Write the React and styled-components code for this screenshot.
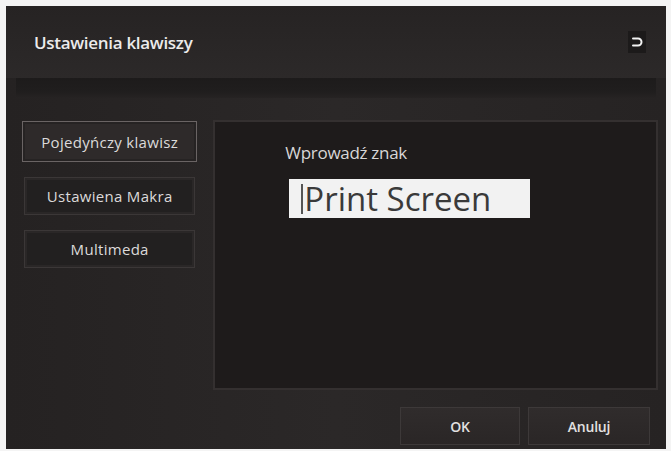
import React from 'react'
import styled, { createGlobalStyle } from 'styled-components'

const GlobalStyle = createGlobalStyle`
  html, body {
    margin: 0;
    padding: 0;
    background: #f4f4f4;
  }
  body {
    font-family: "Open Sans", "DejaVu Sans", sans-serif;
  }
`

const Frame = styled.div`
  margin: 6px 0 0 6px;
  width: 660px;
  height: 443px;
  display: flex;
  flex-direction: column;
  background: linear-gradient(90deg, #252222 0%, #2b2828 50%, #262323 100%);
  overflow: hidden;
`

const Header = styled.div`
  height: 72px;
  display: flex;
  align-items: center;
  justify-content: space-between;
  padding: 0 20px 0 28px;
  box-sizing: border-box;
  background: linear-gradient(180deg, #262323 0%, #2c2929 100%);
`

const Title = styled.h1`
  margin: 0;
  font-size: 17px;
  font-weight: 600;
  letter-spacing: -0.3px;
  color: #ecebeb;
`

const BackButton = styled.button`
  width: 18px;
  height: 22px;
  padding: 0;
  border: none;
  background: #1c1a1a;
  display: flex;
  align-items: center;
  justify-content: center;
`

const Separator = styled.div`
  height: 20px;
  margin: 0 10px;
  background: linear-gradient(180deg, #1d1b1b 0%, #201e1e 70%, #262323 100%);
`

const Body = styled.div`
  flex: 1;
  display: flex;
  padding: 22px 8px 0 16px;
  gap: 16px;
`

const Sidebar = styled.div`
  width: 176px;
  display: flex;
  flex-direction: column;
  gap: 15px;
  padding-top: 1px;
`

const SideButton = styled.button`
  height: ${p => (p.$active ? '41px' : '38px')};
  margin: 0 ${p => (p.$active ? '0' : '2px')};
  border: 1px solid ${p => (p.$active ? '#6a6464' : '#3b3737')};
  background: ${p => (p.$active ? '#2e2a2a' : '#222020')};
  box-shadow: inset 0 0 0 2px ${p => (p.$active ? '#262323' : '#2a2727')};
  color: #dcdada;
  font-family: "Open Sans", "DejaVu Sans", sans-serif;
  font-size: 15px;
  letter-spacing: 0.3px;
  padding: 0;
  cursor: pointer;
`

const Panel = styled.div`
  width: 446px;
  height: 270px;
  box-sizing: border-box;
  border: 2px solid #343030;
  background: #1e1b1b;
  padding: 19px 0 0 70px;
`

const Label = styled.div`
  color: #d8d6d6;
  font-size: 17px;
  letter-spacing: -0.3px;
  line-height: 24px;
`

const Field = styled.div`
  margin: 14px 0 0 4px;
  width: 241px;
  height: 39px;
  background: #f2f2f2;
  display: flex;
  align-items: center;
  padding-left: 12px;
  box-sizing: border-box;
  color: #3a3a3a;
  font-size: 33px;
  line-height: 39px;
`

const Caret = styled.span`
  width: 2px;
  height: 30px;
  background: #555;
  margin-right: 1px;
`

const Footer = styled.div`
  height: 59px;
  display: flex;
  justify-content: flex-end;
  align-items: flex-start;
  gap: 8px;
  padding: 17px 16px 0 0;
  box-sizing: border-box;
`

const ActionButton = styled.button`
  width: ${p => p.$w}px;
  height: 38px;
  border: 1px solid #3d3939;
  background: linear-gradient(180deg, #302c2c 0%, #2a2626 100%);
  color: #e2e0e0;
  font-family: "Open Sans", "DejaVu Sans", sans-serif;
  font-size: 14px;
  font-weight: 600;
  letter-spacing: -0.2px;
`

const BackIcon = () => (
  <svg width="12" height="12" viewBox="0 0 12 12" fill="none">
    <path
      d="M2 2.5 H7 A3.5 3.5 0 0 1 7 9.5 H2"
      stroke="#f2f2f2"
      strokeWidth="2"
      strokeLinecap="round"
    />
  </svg>
)

export default function App() {
  return (
    <>
      <GlobalStyle />
      <Frame>
        <Header>
          <Title>Ustawienia klawiszy</Title>
          <BackButton aria-label="Wstecz">
            <BackIcon />
          </BackButton>
        </Header>
        <Separator />
        <Body>
          <Sidebar>
            <SideButton $active>Pojedyńczy klawisz</SideButton>
            <SideButton>Ustawiena Makra</SideButton>
            <SideButton>Multimeda</SideButton>
          </Sidebar>
          <Panel>
            <Label>Wprowadź znak</Label>
            <Field>
              <Caret />
              Print Screen
            </Field>
          </Panel>
        </Body>
        <Footer>
          <ActionButton $w={120}>OK</ActionButton>
          <ActionButton $w={122}>Anuluj</ActionButton>
        </Footer>
      </Frame>
    </>
  )
}
